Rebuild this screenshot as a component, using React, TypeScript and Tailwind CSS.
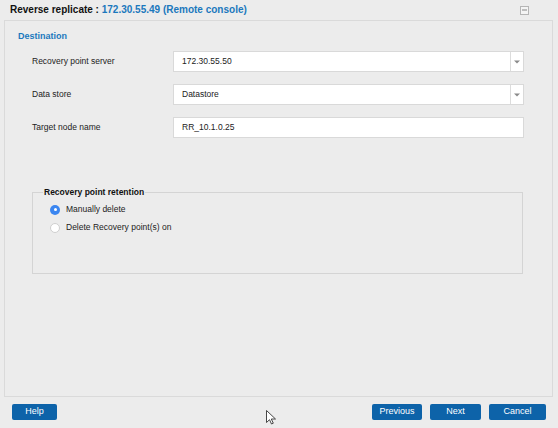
import React from "react";

function Field({
  label,
  value,
  dropdown = false,
}: {
  label: string;
  value: string;
  dropdown?: boolean;
}) {
  return (
    <div className="flex items-center h-[21px]">
      <div className="w-[168px] pl-[27px] text-[8.5px] text-[#222]">{label}</div>
      <div className="w-[351px] h-[21px] flex bg-white border border-[#d9d9d9]">
        <div className="flex-1 flex items-center pl-[8px] text-[8.5px] text-[#222]">
          {value}
        </div>
        {dropdown && (
          <div className="w-[13px] border-l border-[#dcdcdc] flex items-center justify-center">
            <svg width="6" height="4" viewBox="0 0 6 4">
              <path d="M0 0.5h6L3 3.5z" fill="#8a8a8a" />
            </svg>
          </div>
        )}
      </div>
    </div>
  );
}

function Radio({ checked, label }: { checked?: boolean; label: string }) {
  return (
    <div className="flex items-center gap-[6px] h-[18px]">
      {checked ? (
        <span className="w-[10px] h-[10px] rounded-full bg-[#3b86f0] flex items-center justify-center">
          <span className="w-[3px] h-[3px] rounded-full bg-white" />
        </span>
      ) : (
        <span className="w-[10px] h-[10px] rounded-full bg-white border border-[#cfcfcf]" />
      )}
      <span className="text-[8.5px] text-[#222]">{label}</span>
    </div>
  );
}

function Btn({ children, w }: { children: React.ReactNode; w: string }) {
  return (
    <button
      className={`${w} h-[16px] rounded-[2px] bg-[#0d63a9] text-white text-[9px] flex items-center justify-center`}
    >
      {children}
    </button>
  );
}

export default function App() {
  return (
    <div className="relative w-[558px] h-[428px] bg-[#ececec] flex flex-col font-['Liberation_Sans',Arial,sans-serif] overflow-hidden">
      {/* Title bar */}
      <div className="h-[20px] flex items-center justify-between pl-[10px] pr-[29px] shrink-0">
        <div className="text-[10px] font-bold text-[#111] leading-none">
          Reverse replicate :{" "}
          <span className="text-[#1b78bd]">172.30.55.49 (Remote console)</span>
        </div>
        <span className="w-[9px] h-[9px] border border-[#b5b5b5] bg-[#f4f4f4] flex items-center justify-center">
          <span className="w-[5px] h-[2px] bg-[#bdbdbd]" />
        </span>
      </div>

      {/* Main panel */}
      <div className="ml-[4px] mr-[5px] h-[377px] border border-[#dadada] flex flex-col shrink-0">
        <div className="pl-[13px] pt-[10px] text-[9px] font-bold text-[#1b78bd] leading-[11px]">
          Destination
        </div>
        <div className="flex flex-col gap-[12px] mt-[9px]">
          <Field label="Recovery point server" value="172.30.55.50" dropdown />
          <Field label="Data store" value="Datastore" dropdown />
          <Field label="Target node name" value="RR_10.1.0.25" />
        </div>

        <fieldset className="ml-[27px] mr-[29px] mt-[48px] h-[88px] border border-[#d4d4d4] px-[10px]">
          <legend className="px-[1px] text-[8.5px] font-bold text-[#111]">
            Recovery point retention
          </legend>
          <div className="flex flex-col pl-[7px] mt-[2px]">
            <Radio checked label="Manually delete" />
            <Radio label="Delete Recovery point(s) on" />
          </div>
        </fieldset>
      </div>

      {/* Footer */}
      <div className="flex-1 flex items-center px-[12px] pb-[2px]">
        <Btn w="w-[45px]">Help</Btn>
        <div className="flex-1" />
        <div className="flex gap-[8px]">
          <Btn w="w-[50px]">Previous</Btn>
          <Btn w="w-[51px]">Next</Btn>
          <Btn w="w-[57px]">Cancel</Btn>
        </div>
      </div>

      {/* Mouse cursor */}
      <svg
        className="absolute left-[266px] top-[410px]"
        width="10"
        height="15"
        viewBox="0 0 10 15"
      >
        <path
          d="M0.5 0.5v12l3-2.8 2 4.3 1.8-.8-2-4.2h4.2z"
          fill="#fff"
          stroke="#333"
          strokeWidth="0.9"
          strokeLinejoin="round"
        />
      </svg>
    </div>
  );
}
